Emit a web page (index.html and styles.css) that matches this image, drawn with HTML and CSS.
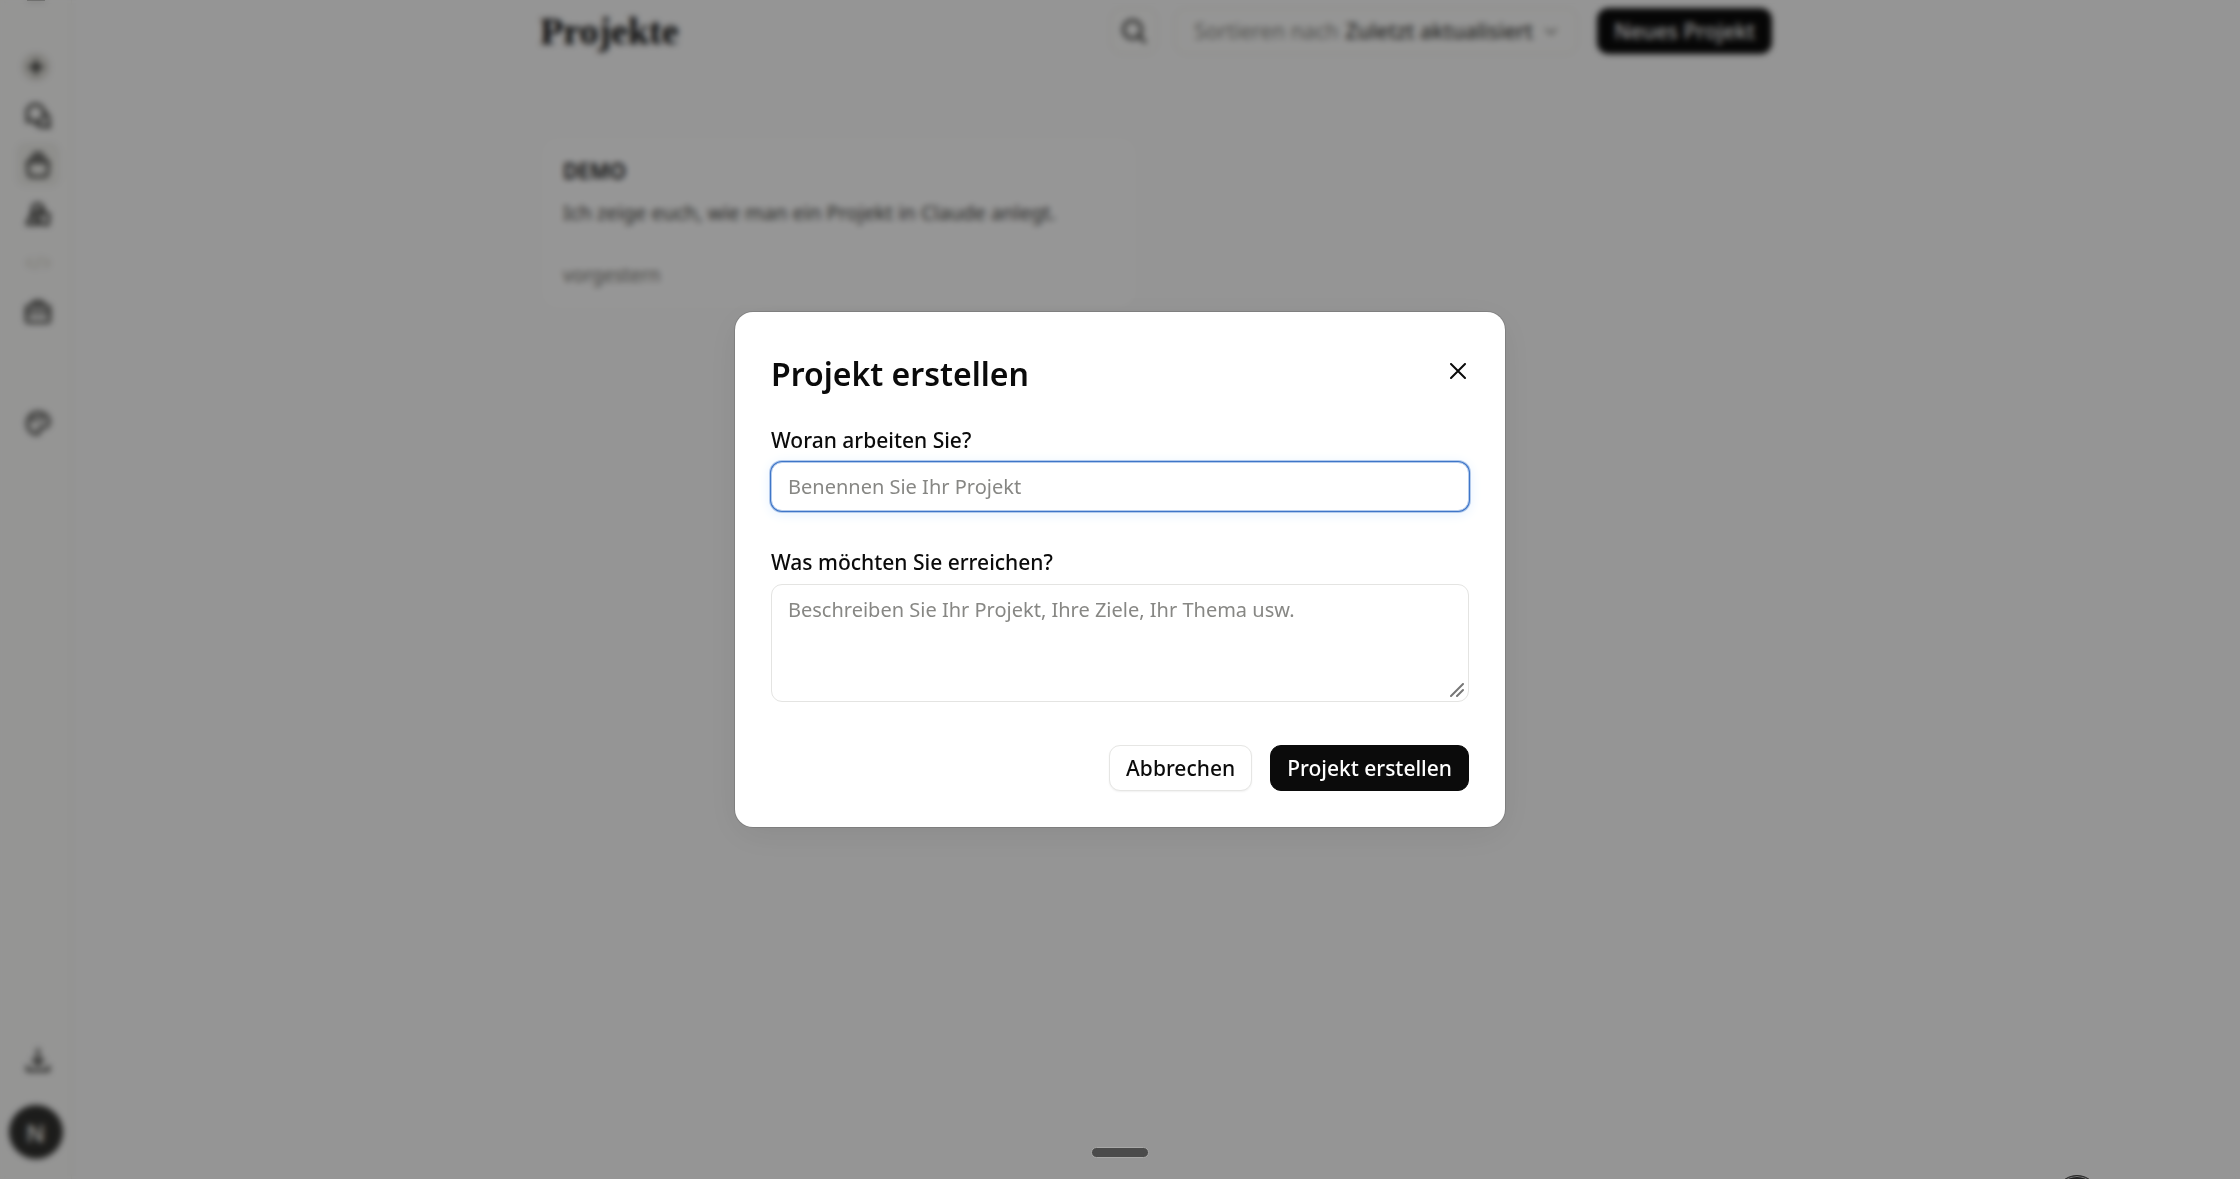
FILE: index.html
```html
<!DOCTYPE html>
<html lang="de">
<head>
  <meta charset="UTF-8">
  <title>Projekte</title>
  <meta name="viewport" content="width=device-width, initial-scale=1.0" />
  <link rel="stylesheet" href="styles.css">
</head>
<body>

  <div class="app">
    <nav class="sidebar" aria-label="Navigation">
      <span class="sidebar-toggle"></span>
      <button class="nav-item new-chat" aria-label="Neuer Chat">
        <svg class="plus-icon" width="28" height="28" viewBox="0 0 28 28"><circle cx="14" cy="14" r="14" fill="#dbdad4"/><path d="M14 8v12M8 14h12" stroke="#1f1f1d" stroke-width="3"/></svg>
      </button>
      <a class="nav-item" href="#" aria-label="Chats">
        <svg class="icon" viewBox="0 0 26 26"><path d="M10.500 1.500a8.500 8.500 0 1 1-4 16L2 18.500l1-4.500a8.500 8.500 0 0 1 7.500-12.500z"/><path d="M19.500 9.500a7.500 7.500 0 0 1 4 9.500l1 5-5-.8a7.500 7.500 0 0 1-8.500-3.200"/></svg>
      </a>
      <a class="nav-item active" href="#" aria-label="Projekte">
        <svg class="icon" viewBox="0 0 26 26"><path d="M2.500 10h21l-1 11.500a3 3 0 0 1-3 3h-13a3 3 0 0 1-3-3z"/><path d="M5.500 6h15M9 1.500h8"/></svg>
      </a>
      <a class="nav-item" href="#" aria-label="Artefakte">
        <svg class="icon" viewBox="0 0 26 26"><path d="M8 11a5.500 5.500 0 1 1 10-1"/><path d="M7.500 11.500L2 23h10.500zM14.500 12l9.500 1-1 10.500-8-1z"/><path d="M9 12l8-3"/></svg>
      </a>
      <a class="nav-item faint" href="#" aria-label="Code">
        <svg class="icon" viewBox="0 0 26 26"><path d="M6 9l-4 4 4 4M20 9l4 4-4 4M15 8l-4 10"/></svg>
      </a>
      <a class="nav-item" href="#" aria-label="Arbeitsbereich">
        <svg class="icon" viewBox="0 0 26 26"><rect x="1.500" y="7" width="23" height="16" rx="2"/><path d="M8 7V5a2.500 2.500 0 0 1 2.500-2.500h5A2.500 2.500 0 0 1 18 5v2M2 13.500h22"/></svg>
      </a>
      <a class="nav-item design" href="#" aria-label="Design">
        <svg class="icon" viewBox="0 0 26 26"><path d="M13 2.500c6.500 0 11 4 11 9.500 0 4-3 5.500-6.500 5-2.500-.3-3.500 1-3 3 .4 2-.5 4-2.500 4C6.500 24 2.500 19 2.500 13S7 2.500 13 2.500z"/><circle cx="9" cy="9.500" r="1"/><circle cx="16" cy="8.500" r="1"/></svg>
      </a>
      <div class="sidebar-bottom">
        <button class="nav-item" aria-label="Herunterladen">
          <svg class="icon" viewBox="0 0 26 26"><path d="M13 1.500v15M8 11.500l5 5 5-5M2.500 18.500v4h21v-4"/></svg>
        </button>
        <button class="avatar">N</button>
      </div>
    </nav>

    <main class="main">
      <div class="content">
        <header class="page-header">
          <h1>Projekte</h1>
          <div class="tools">
            <button class="tool search" aria-label="Suchen">
              <svg width="28" height="28" viewBox="0 0 28 28"><circle cx="12.500" cy="12.500" r="9"/><path d="M19 19l6 6"/></svg>
            </button>
            <button class="tool sort">
              <span class="sort-label">Sortieren nach</span> Zuletzt aktualisiert
              <svg width="14" height="14" viewBox="0 0 14 14"><path d="M2 5l5 5 5-5"/></svg>
            </button>
            <button class="btn btn-primary new-project">Neues Projekt</button>
          </div>
        </header>

        <section class="projects">
          <a class="card" href="#">
            <h2>DEMO</h2>
            <p>Ich zeige euch, wie man ein Projekt in Claude anlegt.</p>
            <time>vorgestern</time>
          </a>
        </section>
      </div>
    </main>
  </div>

  <div class="overlay">
    <form class="modal" role="dialog" aria-modal="true" aria-labelledby="modalTitle">
      <div class="modal-header">
        <h2 id="modalTitle">Projekt erstellen</h2>
        <button type="button" class="close-btn" aria-label="Schließen">
          <svg width="16" height="16" viewBox="0 0 16 16"><path d="M1 1l14 14M15 1L1 15"/></svg>
        </button>
      </div>

      <div class="field">
        <label for="name">Woran arbeiten Sie?</label>
        <input class="control focused" type="text" id="name" placeholder="Benennen Sie Ihr Projekt">
      </div>

      <div class="field">
        <label for="goal">Was möchten Sie erreichen?</label>
        <div class="textarea-wrap">
          <textarea class="control" id="goal" placeholder="Beschreiben Sie Ihr Projekt, Ihre Ziele, Ihr Thema usw."></textarea>
          <svg class="grip" width="14" height="14" viewBox="0 0 14 14"><path d="M1 13L13 1M7 13l6-6"/></svg>
        </div>
      </div>

      <div class="actions">
        <button type="button" class="btn btn-secondary">Abbrechen</button>
        <button type="submit" class="btn btn-primary">Projekt erstellen</button>
      </div>
    </form>
  </div>

  <span class="home-bar"></span>
  <span class="corner-badge"></span>

</body>
</html>
```

FILE: styles.css
```css
* {
  box-sizing: border-box;
}

body {
  margin: 0;
  height: 100vh;
  overflow: hidden;
  font-family: "Noto Sans", sans-serif;
  font-size: 20px;
  color: #0b0b0b;
  background-color: #f8f8f8;
}

h1, h2, p {
  margin: 0;
}

button {
  font-family: inherit;
  cursor: pointer;
}

a {
  color: inherit;
  text-decoration: none;
}

svg {
  fill: none;
  stroke: currentColor;
  stroke-width: 2;
  stroke-linecap: round;
  stroke-linejoin: round;
}

.app {
  display: flex;
  height: 100vh;
}

/* Sidebar */
.sidebar {
  display: flex;
  flex-direction: column;
  align-items: center;
  width: 72px;
  padding-bottom: 20px;
  border-right: 1px solid #efeeea;
  background-color: #f8f8f7;
}

.sidebar-toggle {
  width: 18px;
  height: 1px;
  margin-bottom: 43px;
  background-color: #8c8c88;
}

.nav-item {
  display: flex;
  align-items: center;
  justify-content: center;
  width: 44px;
  height: 45px;
  margin: 0 0 4px 5px;
  padding: 0;
  border: none;
  border-radius: 10px;
  background: none;
  color: #3d3d3a;
}

.nav-item.new-chat {
  margin-left: 0;
}

.nav-item.active {
  background-color: #eeeeea;
}

.nav-item.faint {
  color: #dddbd2;
}

.nav-item.design {
  margin-top: 62px;
}

.icon {
  width: 26px;
  height: 26px;
  stroke-width: 3;
}

.plus-icon {
  stroke: none;
}

.sidebar-bottom {
  display: flex;
  flex-direction: column;
  align-items: center;
  gap: 18px;
  margin-top: auto;
}

.avatar {
  width: 54px;
  height: 54px;
  padding: 0;
  border: none;
  border-radius: 50%;
  background-color: #30302e;
  color: #f0efea;
  font-size: 24px;
  font-weight: 600;
}

/* Projektliste */
.main {
  flex: 1;
  padding: 8px 36px;
}

.content {
  max-width: 1232px;
  margin: 0 auto;
}

.page-header {
  display: flex;
  align-items: center;
  justify-content: space-between;
  margin-bottom: 82px;
}

h1 {
  font-family: "Liberation Serif", serif;
  font-size: 38px;
  font-weight: 700;
  line-height: 46px;
}

.tools {
  display: flex;
  align-items: center;
}

.tool {
  display: flex;
  align-items: center;
  height: 46px;
  border: 1px solid #e9e8e3;
  border-radius: 11px;
  background-color: #f9f9f8;
  color: #3d3d3a;
}

.search {
  width: 46px;
  margin-right: 18px;
  padding: 0 8px;
}

.search svg {
  stroke-width: 3;
}

.sort {
  gap: 7px;
  margin-right: 20px;
  padding: 0 18px;
  font-size: 21px;
  font-weight: 500;
}

.sort-label {
  color: #84847f;
  font-weight: 400;
}

.sort svg {
  margin-left: 4px;
  color: #84847f;
}

.projects {
  display: grid;
  grid-template-columns: 1fr 1fr;
  gap: 36px;
}

.card {
  display: flex;
  flex-direction: column;
  gap: 14px;
  padding: 20px 22px;
  border: 1px solid #f5f4f1;
  border-radius: 18px;
  background-color: #fbfbfb;
}

.card h2 {
  font-size: 21px;
  font-weight: 600;
  line-height: 28px;
}

.card p {
  color: #3d3d3a;
  line-height: 28px;
}

.card time {
  margin-top: 20px;
  color: #73726c;
  font-size: 19px;
  line-height: 28px;
}

/* Dialog */
.overlay {
  position: fixed;
  inset: 0;
  display: flex;
  align-items: center;
  justify-content: center;
  padding-bottom: 40px;
  background-color: rgba(0, 0, 0, 0.4);
  backdrop-filter: blur(3px);
}

.modal {
  width: 100%;
  max-width: 770px;
  padding: 36px;
  border-radius: 18px;
  background-color: #fff;
  box-shadow: 0 0 0 1px rgba(0, 0, 0, 0.12), 0 8px 36px rgba(0, 0, 0, 0.07);
}

.modal-header {
  display: flex;
  align-items: flex-start;
  justify-content: space-between;
  margin-bottom: 26px;
}

.modal-header h2 {
  font-size: 32px;
  font-weight: 600;
  line-height: 52px;
}

.close-btn {
  display: flex;
  padding: 15px 3px;
  border: none;
  background: none;
  color: #0b0b0b;
}

.field {
  display: flex;
  flex-direction: column;
  gap: 8px;
  margin-bottom: 37px;
}

.field label {
  font-size: 21px;
  font-weight: 500;
  line-height: 28px;
}

.control {
  display: block;
  width: 100%;
  height: 49px;
  padding: 0 16px;
  border: 1px solid #e4e4e2;
  border-radius: 11px;
  outline: none;
  background-color: #fff;
  color: #0b0b0b;
  font-family: inherit;
  font-size: 20px;
  line-height: 30px;
}

.control::placeholder {
  color: #878784;
  opacity: 1;
}

.control.focused {
  border-color: #b4cbec;
  box-shadow: 0 0 0 1px #3f76c8, 0 0 0 2px #b4cbec, 0 2px 12px 2px #e8f3fe;
}

.textarea-wrap {
  position: relative;
}

textarea.control {
  height: 118px;
  padding: 10px 16px;
  resize: none;
}

.grip {
  position: absolute;
  right: 5px;
  bottom: 5px;
  color: #777;
}

.actions {
  display: flex;
  justify-content: flex-end;
  gap: 18px;
  padding-top: 6px;
}

.btn {
  height: 46px;
  padding: 0 16px;
  border: 1px solid #0b0b0b;
  border-radius: 11px;
  font-size: 21px;
  font-weight: 500;
}

.btn-primary {
  background-color: #0b0b0b;
  color: #fff;
}

.btn-secondary {
  border-color: #e6e6e4;
  background-color: #fff;
  color: #0b0b0b;
  box-shadow: 0 1px 2px rgba(0, 0, 0, 0.06);
}

/* Elemente über der Seite */
.home-bar {
  position: fixed;
  bottom: 21px;
  left: 50%;
  width: 58px;
  height: 11px;
  margin-left: -29px;
  border: 1px solid #a8a8a7;
  border-radius: 6px;
  background-color: #4b4b4b;
}

.corner-badge {
  position: fixed;
  right: 141px;
  bottom: -40px;
  width: 44px;
  height: 44px;
  border: 1px solid #2b2b2b;
  border-radius: 50%;
  background-color: #222;
  box-shadow: inset 0 0 0 1px #777;
}
```
